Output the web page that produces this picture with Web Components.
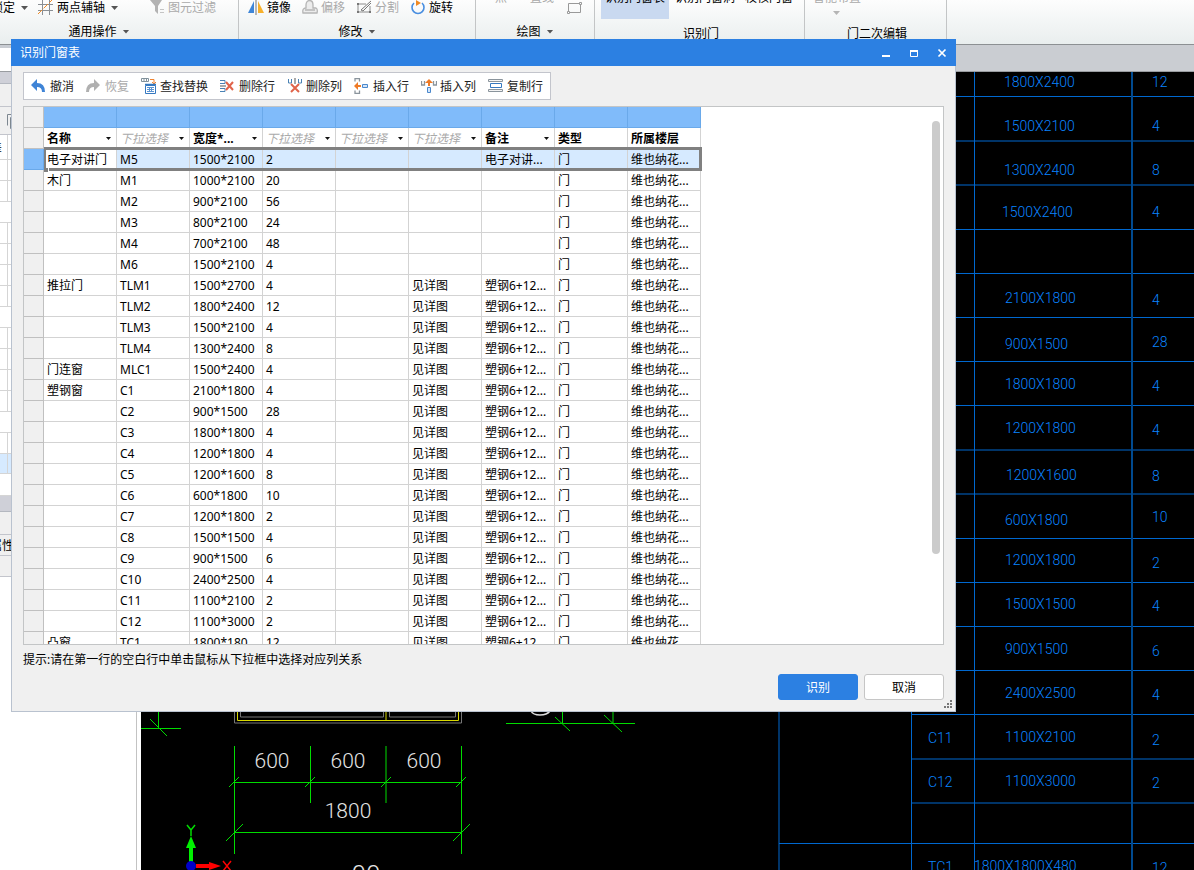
<!DOCTYPE html>
<html lang="zh-CN">
<head>
<meta charset="utf-8">
<title>识别门窗表</title>
<style>
  html, body { margin: 0; height: 100%; }
  body { overflow: hidden; font: 12px/16px "Noto Sans", "Noto Sans CJK SC", sans-serif; color: #000; background: #fff; }
</style>
</head>
<body>
<cad-app></cad-app>

<script>
const define = (name, html, setup, watched = []) => {
  const template = document.createElement('template');
  template.innerHTML = html;
  customElements.define(name, class extends HTMLElement {
    static observedAttributes = watched;
    constructor() {
      super();
      this.attachShadow({ mode: 'open' }).append(template.content.cloneNode(true));
    }
    connectedCallback() { if (setup) setup(this, this.shadowRoot); }
    attributeChangedCallback() { if (setup) setup(this, this.shadowRoot); }
  });
};

/* ---------- icons ---------- */
const icons = {
  axis: '<path d="M4.500 0v15M11.500 0v15M0 4.500h15M0 10.500h15" stroke="#8a8f94" fill="none"/><path d="M0 14 14 0" stroke="#f08a24" stroke-dasharray="6 2"/>',
  filter: '<path d="M1 0h12L9 6v8l-3-3V6z" fill="#b3b3b3"/><path d="M11 9.500h4M11 12.500h4" stroke="#c4c4c4"/>',
  mirror: '<path d="M6 1v12H0z" fill="#3f86d8"/><path d="M10 1v12h6z" fill="#f7b02b"/><path d="M8 0v15" stroke="#777"/>',
  offset: '<path d="M4 8V5c0-6 7-6 7 0v3h3q2 1 1 5H1q-1-5 3-5zM3 10h10" stroke="#b5b5b5" stroke-width="1.3" fill="#ececec"/>',
  split: '<path d="M2 4h8M2 4v8M2 12h12V6" fill="none" stroke="#8c8c8c"/><path d="M5 10 15 1M7 11 15 3M5 10l2 1" stroke="#777" fill="none"/><path d="M1 3h2v2H1zM1 11h2v2H1zM13 11h2v2h-2z" fill="#777"/>',
  rotate: '<path d="M4 3a6 6 0 1 0 8 0" stroke="#4a8fe0" stroke-width="1.6" fill="none"/><path d="M6 0v6l5-3z" fill="#f08a24"/>',
  rect: '<path d="M2.500 3.500h12v9h-12z" stroke="#999" fill="none"/><path d="M1.500 11.500h2v2h-2zM13.500 2.500h2v2h-2z" fill="#fff" stroke="#999"/>',
  undo: '<path d="M0 7 6 1v4q8 0 8 9h-3q0-5-5-5v4z" fill="#3f84d6"/>',
  redo: '<path d="M14 7 8 1v4q-8 0-8 9h3q0-5 5-5v4z" fill="#b0b0b0"/>',
  find: '<path d="M.5.5h7v3h-7zM3 .5v3M5.500.5v3" stroke="#80909a" fill="none"/><path d="M9 1.500h4v4M11 4l2 2 2-2" stroke="#ef8432" fill="none"/><path d="M4 6.500h11" stroke="#3578c0" stroke-width="1.500"/><path d="M4.500 7.500h10v8h-10z" stroke="#3578c0" fill="#fff"/><path d="M6 9.500h7M6 11.500h7M6 13.500h7M8.500 9v5M10.500 9v5" stroke="#5b94d2"/>',
  delrow: '<path d="M0 2.500h5v3H0M0 13.500h5v-3H0" stroke="#4a82b4" fill="none"/><path d="M0 7h6v2H0z" fill="#aaa"/><path d="m6 4 7 8M13 4l-7 8" stroke="#e0644a" stroke-width="2"/>',
  delcol: '<path d="M1.500 1v4h3V1M11.500 1v4h3V1" stroke="#4a82b4" fill="none"/><path d="M7 0h2v6H7z" fill="#aaa"/><path d="m4 6 8 8M12 6l-8 8" stroke="#e0644a" stroke-width="2"/>',
  insrow: '<path d="M1 3.500V.5h4.500v3M1 12.500v3h4.500v-3" stroke="#8a949c" fill="none" stroke-width="1.300"/><path d="M0 8l4-4v3h3v2H4v3z" fill="#ef7b26"/><path d="M8.500 6.500h5v3h-5z" stroke="#4b88cc" fill="#d4e6fa"/>',
  inscol: '<path d="M.5 3v4h3V3M12.500 3v4h3V3" stroke="#8a949c" fill="none" stroke-width="1.300"/><path d="M8 1l4 4H9v3H7V5H4z" fill="#ef7b26"/><path d="M6.500 9.500h3v5h-3z" stroke="#4b88cc" fill="#d4e6fa"/>',
  copy: '<path d="M.5 1.500h14v2H.5zM.5 11.500h14v2H.5z" stroke="#8a949c" fill="#f4f4f4"/><path d="M2.500 5.500h11v4h-11z" stroke="#3578c0" fill="#fff"/>',
  layers: '<path d="M5 .5H.5v11M8 3.500H3.500v11H8" stroke="#7d8790" fill="none"/>'
};
define('app-icon', `
  <style>
    :host { display: block; width: 16px; height: 16px; flex: none; }
    :host([hidden]) { display: none; }
    svg { display: block; width: 16px; height: 16px; }
  </style>
  <svg viewBox="0 0 16 16" aria-hidden="true"></svg>`,
  (el, root) => { root.querySelector('svg').innerHTML = icons[el.getAttribute('name')] || ''; }, ['name']);

define('drop-caret', `
  <style>
    :host { display: block; flex: none; width: 7px; height: 4px; background: #555; clip-path: polygon(0 0, 100% 0, 50% 100%); }
    :host([dim]) { background: #b5b5b5; }
  </style>`);

/* ---------- ribbon ---------- */
define('ribbon-group', `
  <style>
    :host { display: flex; flex-direction: column; flex: none; box-sizing: border-box; height: 44px; border-right: 1px solid #c3c5c6; overflow: hidden; }
    .tools { height: 19px; display: flex; align-items: flex-start; }
    .label { flex: 1; display: flex; align-items: center; justify-content: center; gap: 6px; }
    :host([low]) .label { padding-top: 4px; }
    drop-caret { display: none; }
    :host([menu]) drop-caret { display: block; }
  </style>
  <div class="tools"><slot></slot></div>
  <div class="label"><slot name="label"></slot><drop-caret></drop-caret></div>`);

define('ribbon-tool', `
  <style>
    :host { display: block; flex: none; }
    button { all: unset; display: flex; align-items: center; gap: 3px; height: 16px; white-space: nowrap; font: inherit; }
    button:disabled { color: #aaa; }
    drop-caret { display: none; margin-left: 3px; }
    :host([menu]) drop-caret { display: block; }
    :host([raised]) button { height: 19px; align-items: flex-start; line-height: 16px; padding: 0 4px; }
    :host([raised]) span { margin-top: -10px; }
    :host([on]) { background: #c9d9f0; }
  </style>
  <button type="button"><app-icon></app-icon><span><slot></slot></span><drop-caret></drop-caret></button>`,
  (el, root) => {
    const icon = root.querySelector('app-icon');
    if (el.hasAttribute('icon')) icon.setAttribute('name', el.getAttribute('icon'));
    else icon.hidden = true;
    root.querySelector('button').disabled = el.hasAttribute('disabled');
  });

define('app-ribbon', `
  <style>
    :host { display: flex; height: 44px; overflow: hidden; background: linear-gradient(#fdfdfd, #e9eeee); border-bottom: 1px solid #8c9093; }
    .g1 { width: 239px; } .g2 { width: 237px; } .g3 { width: 119px; } .g4 { width: 210px; } .g5 { width: 142px; }
    .g1 ribbon-tool:nth-child(1) { margin-left: -9px; margin-right: 10px; }
    .g1 ribbon-tool:nth-child(2) { margin-right: 31px; }
    .g1 > [slot=label] { margin-left: -40px; }
    .g2 ribbon-tool { margin-left: 9px; }
    .g2 ribbon-tool + ribbon-tool { margin-left: 11px; }
    .g3 ribbon-tool { margin-left: 15px; }
    .g3 ribbon-tool[icon] { margin-left: 8px; }
    .g4 ribbon-tool:first-child { margin-left: 6px; }
    .g4 ribbon-tool + ribbon-tool { margin-left: 2px; }
    .g5 ribbon-tool { margin-left: 4px; }
    .g4 > [slot=label], .g5 > [slot=label] { margin-left: 3px; }
    .dots { align-self: flex-end; margin: 0 0 4px -32px; }
  </style>
  <ribbon-group class="g1" menu>
    <ribbon-tool menu>锁定</ribbon-tool>
    <ribbon-tool icon="axis" menu>两点辅轴</ribbon-tool>
    <ribbon-tool icon="filter" disabled>图元过滤</ribbon-tool>
    <span slot="label">通用操作</span>
  </ribbon-group>
  <ribbon-group class="g2" menu>
    <ribbon-tool icon="mirror">镜像</ribbon-tool>
    <ribbon-tool icon="offset" disabled>偏移</ribbon-tool>
    <ribbon-tool icon="split" disabled>分割</ribbon-tool>
    <ribbon-tool icon="rotate">旋转</ribbon-tool>
    <span slot="label">修改</span>
  </ribbon-group>
  <ribbon-group class="g3" menu>
    <ribbon-tool raised disabled>点</ribbon-tool>
    <ribbon-tool raised disabled>直线</ribbon-tool>
    <ribbon-tool icon="rect"></ribbon-tool>
    <span slot="label">绘图</span>
  </ribbon-group>
  <ribbon-group class="g4" low>
    <ribbon-tool raised on>识别门窗表</ribbon-tool>
    <ribbon-tool raised>识别门窗洞</ribbon-tool>
    <ribbon-tool raised>校核门窗</ribbon-tool>
    <span slot="label">识别门</span>
  </ribbon-group>
  <ribbon-group class="g5" low>
    <ribbon-tool raised disabled>智能布置</ribbon-tool>
    <drop-caret dim class="dots"></drop-caret>
    <span slot="label">门二次编辑</span>
  </ribbon-group>`);

/* ---------- left panel, mostly hidden behind the dialog ---------- */
define('side-panel', `
  <style>
    :host { display: block; width: 136px; flex: none; border-right: 1px solid #c3c3c3; margin-right: 4px; background: #fff; overflow: hidden; }
    div { box-sizing: border-box; border-bottom: 1px solid #d5d5d5; height: 21px; }
    .bar { height: 12px; background: #cfd0d8; border-color: #b4b8c0; }
    .pane { background: #f0f0f0; border-color: #c3c5cc; }
    .icons { padding: 7px; }
    .head { background: #f0f0f0; text-indent: -10px; line-height: 25px; }
    .row { background: linear-gradient(#d5d5d5, #d5d5d5) 7px 0 / 1px 100% no-repeat; }
    .on { background-color: #d6eaff; }
    .tab { line-height: 21px; text-indent: -10px; }
  </style>`,
  (el, root) => {
    const add = (cls, height, content = '') => {
      const d = document.createElement('div');
      d.className = cls;
      d.append(content);
      d.style.height = height + 'px';
      root.append(d);
    };
    const layers = document.createElement('app-icon');
    layers.setAttribute('name', 'layers');
    add('bar', 12); add('pane', 23); add('pane icons', 28, layers); add('head row', 25, '差');
    [...'11011110111101'].forEach(v => add(v === '1' ? 'row' : '', 21));
    add('row on', 20); add('', 22); add('bar', 16); add('pane', 23); add('pane tab', 21, '属性'); add('pane', 21);
  });

/* ---------- drawing canvas ---------- */
define('cad-canvas', `
  <style>
    :host { display: block; flex: 1; min-width: 0; background: #000; overflow: hidden; }
    svg { display: block; width: 1053px; height: 798px; }
    text { font-family: Roboto, "Noto Sans", sans-serif; font-weight: 300; }
    .blue text { font-size: 14px; fill: #0a84ff; }
    .dim text { font-size: 21px; fill: #e4e4e4; text-anchor: middle; }
    .dim .large { font-size: 26px; }
  </style>
  <svg viewBox="141 72 1053 798" role="img" aria-label="门窗表图纸">
    <g class="blue"></g>
    <g fill="none" stroke="#777"><path d="M234.500 700v23h227V700M240.500 700v17h143V700M389.500 700v17h66V700"/></g>
    <path d="M237.500 700v20.500h221V700M386 700v20" fill="none" stroke="#d8d800"/>
    <g fill="none" stroke="#00dc00">
      <path d="M141 728.500h40M150 719l17 17M158.500 711v17M506 723.500h129M555 717l15 14M604 715l18 17M562.500 711v12M613 711v12"/>
      <path d="M234.500 746v108M461.500 746v108M310.500 746v57M386 746v57M234 782.500h228M234 832.500h228"/>
      <path d="M229 787l10-10M305 787l10-10M381 787l10-10M456 787l10-10M226 841l17-17M453 841l17-17"/>
    </g>
    <path d="M531 711q2 4 9 4t10-4" fill="none" stroke="#ddd" stroke-width="1.500"/>
    <g class="dim">
      <text x="272" y="768">600</text><text x="348" y="768">600</text><text x="424" y="768">600</text><text x="348" y="818">1800</text>
      <text class="large" x="366" y="884">00</text>
    </g>
    <path d="M191 866v-20" stroke="#00f000" stroke-width="4"/><path d="M191 836l-5 12h10z" fill="#00f000"/>
    <path d="M187 825l4 5 4-5M191 830v6" stroke="#00dc00" fill="none" stroke-width="1.500"/>
    <path d="M196 866h15" stroke="#f00" stroke-width="4"/><path d="M221 866l-12-4v8z" fill="#f00"/>
    <path d="M223 861l8 10M231 861l-8 10" stroke="#f00" stroke-width="1.500"/>
    <circle cx="191" cy="866" r="5" fill="#0000c8"/>
  </svg>`,
  (el, root) => {
    const g = root.querySelector('.blue');
    const rows = [
      ['1800X2400', 1004, 82, '12', 1152, 82], ['1500X2100', 1004, 126, '4', 1152, 126],
      ['1300X2400', 1004, 170, '8', 1152, 170], ['1500X2400', 1002, 212, '4', 1152, 212],
      ['2100X1800', 1005, 298, '4', 1152, 300], ['900X1500', 1005, 344, '28', 1152, 342],
      ['1800X1800', 1005, 384, '4', 1152, 386], ['1200X1800', 1005, 428, '4', 1152, 430],
      ['1200X1600', 1006, 475, '8', 1152, 476], ['600X1800', 1005, 520, '10', 1152, 517],
      ['1200X1800', 1005, 560, '2', 1152, 563], ['1500X1500', 1005, 604, '4', 1152, 606],
      ['900X1500', 1005, 649, '6', 1152, 651], ['2400X2500', 1005, 693, '4', 1152, 695],
      ['1100X2100', 1005, 737, '2', 1152, 740], ['1100X3000', 1005, 781, '2', 1152, 783],
      ['1800X1800X480', 974, 866, '12', 1152, 868], ['C11', 928, 738], ['C12', 928, 782], ['TC1', 928, 867]
    ];
    const lines = [96.5, 141, 185, 229.5, 273.5, 317.5, 361.5, 405.5, 450, 494, 538.5, 582.5, 626.5, 670.5, 714.5, 759, 803];
    g.innerHTML =
      '<path fill="none" stroke="#0068d0" d="M974.500 71v799M911.500 700v170M779 700v170M779 843.500h415' +
      lines.map(y => `M911 ${y}h283`).join('') + '"/><path stroke="#004a90" stroke-width="2" d="M1132 71v799"/>' +
      rows.map(([a, x, y, b, bx, by]) =>
        `<text x="${x}" y="${y + 5}">${a}</text>` + (b ? `<text x="${bx}" y="${by + 5}">${b}</text>` : '')).join('');
  });

/* ---------- dialog ---------- */
define('tool-button', `
  <style>
    :host { display: block; }
    button { all: unset; display: flex; align-items: center; gap: 3px; padding: 0 6px; height: 26px; white-space: nowrap; font: inherit; color: #222; }
    button:disabled { color: #aaa; }
    span { padding-top: 2px; }
  </style>
  <button type="button"><app-icon></app-icon><span><slot></slot></span></button>`,
  (el, root) => {
    root.querySelector('app-icon').setAttribute('name', el.getAttribute('icon'));
    root.querySelector('button').disabled = el.hasAttribute('disabled');
  });

define('data-grid', `
  <style>
    :host { display: block; position: relative; overflow: hidden; box-sizing: border-box; background: #fff; border: 1px solid #c3c5c6; }
    table { table-layout: fixed; width: 677px; border-collapse: separate; border-spacing: 0; }
    col { width: 73px; } col:first-child { width: 20px; }
    td, th { box-sizing: border-box; height: 21px; padding: 0 3px; border: solid #d3d3d3; border-width: 0 1px 1px 0; line-height: 20px; text-align: left; font-weight: 400; white-space: nowrap; overflow: hidden; }
    td { padding-top: 2px; line-height: 18px; }
    tr > :first-child { background: #f0f0f0; border-color: #c0c0c0; }
    .letters th + th { background: #80bbfa; border-color: #6aa9ea; }
    .fields th { border-bottom-width: 0; font-weight: 700; }
    .fields th:first-child { border-bottom-width: 1px; }
    label { display: grid; align-items: center; }
    label > * { grid-area: 1 / 1; }
    select { appearance: none; border: 0; margin: 0; padding: 0 10px 0 0; width: 66px; height: 20px; background: none; font: inherit; color: inherit; line-height: 20px; }
    .empty select { font-weight: 400; font-style: italic; color: #aaa; }
    i { justify-self: end; margin-right: 2px; width: 5px; height: 3px; background: #111; clip-path: polygon(0 0, 100% 0, 50% 100%); pointer-events: none; }
    .current td { background: #d6eaff; }
    .current td:nth-child(2) { background: #fff; }
    .current th:first-child { background: #80bbfa; border-color: #6aa9ea; }
    .marker { position: absolute; left: 20px; top: 40px; width: 658px; height: 24px; box-sizing: border-box; border: 3px solid #808080; border-left-width: 2px; }
    .marker::after { content: ""; position: absolute; left: -2px; bottom: -4px; width: 4px; height: 4px; background: #808080; border: solid #fff; border-width: 0 1px 0 0; }
    .thumb { position: absolute; right: 3px; top: 14px; width: 8px; height: 433px; border-radius: 4px; background: #cbcbcb; }
  </style>
  <table aria-label="门窗表">
    <colgroup><col><col><col><col><col><col><col><col><col><col></colgroup>
    <thead></thead><tbody></tbody>
  </table>
  <div class="marker"></div><div class="thumb"></div>`,
  (el, root) => {
    const fields = ['名称', '', '宽度*...', '', '', '', '备注', '类型', '所属楼层'];
    const head = fields.map((f, i) => i > 6 ? `<th scope="col">${f}</th>` :
      `<th scope="col" class="${f ? '' : 'empty'}"><label><select aria-label="列 ${i + 1}"><option>${f || '下拉选择'}</option></select><i></i></label></th>`).join('');
    root.querySelector('thead').innerHTML =
      `<tr class="letters">${'<th></th>'.repeat(10)}</tr><tr class="fields"><th></th>${head}</tr>`;
    const data = `电子对讲门,M5,1500*2100,2|木门,M1,1000*2100,20|,M2,900*2100,56|,M3,800*2100,24|,M4,700*2100,48|,M6,1500*2100,4|推拉门,TLM1,1500*2700,4|,TLM2,1800*2400,12|,TLM3,1500*2100,4|,TLM4,1300*2400,8|门连窗,MLC1,1500*2400,4|塑钢窗,C1,2100*1800,4|,C2,900*1500,28|,C3,1800*1800,4|,C4,1200*1800,4|,C5,1200*1600,8|,C6,600*1800,10|,C7,1200*1800,2|,C8,1500*1500,4|,C9,900*1500,6|,C10,2400*2500,4|,C11,1100*2100,2|,C12,1100*3000,2|凸窗,TC1,1800*180...,12`;
    root.querySelector('tbody').innerHTML = data.split('|').map((line, i) => {
      const cells = [...line.split(','), '', i > 5 ? '见详图' : '', i > 5 ? '塑钢6+12...' : i ? '' : '电子对讲...', '门', '维也纳花...'];
      return `<tr class="${i ? '' : 'current'}"><th scope="row"></th>${cells.map(c => `<td>${c}</td>`).join('')}</tr>`;
    }).join('');
  });

define('table-dialog', `
  <style>
    :host { display: flex; flex-direction: column; background: #f0f0f0; box-sizing: border-box; }
    header { display: flex; align-items: center; height: 27px; background: #2c80e2; color: #fff; padding-left: 9px; }
    h1 { flex: 1; margin: 0; font: inherit; }
    header button { all: unset; display: grid; place-items: center; width: 28px; height: 27px; }
    header svg { display: block; width: 10px; height: 10px; }
    main { flex: 1; min-height: 0; display: flex; flex-direction: column; border: 1px solid #b9c2cf; border-top: 0; padding: 6px 11px 11px; }
    .tools { display: flex; align-self: flex-start; height: 26px; padding: 0 1px; background: #fff; border: 1px solid #c3c5cc; margin-bottom: 6px; }
    data-grid { flex: 1; min-height: 0; }
    p { margin: 0; line-height: 29px; }
    footer { display: flex; justify-content: flex-end; gap: 6px; }
    footer button { box-sizing: border-box; width: 80px; height: 26px; padding: 2px 0 0; border: 1px solid #c6c6c6; border-radius: 3px; background: #fff; font: inherit; }
    footer .primary { background: #2c80e2; border-color: #2c80e2; color: #fff; }
    .grip { position: absolute; right: 4px; bottom: 4px; width: 8px; height: 8px; }
  </style>
  <header>
    <h1><slot name="title"></slot></h1>
    <button type="button" aria-label="最小化"><svg viewBox="0 0 10 10"><path d="M1 7h8v2H1z" fill="#fff"/></svg></button>
    <button type="button" aria-label="最大化"><svg viewBox="0 0 10 10"><path d="M1.500 2.500h7v6h-7z" fill="none" stroke="#fff"/><path d="M1 2h8v2H1z" fill="#fff"/></svg></button>
    <button type="button" aria-label="关闭"><svg viewBox="0 0 10 10"><path d="M1.500 1.500l7 7M8.500 1.500l-7 7" stroke="#fff" stroke-width="1.700"/></svg></button>
  </header>
  <main>
    <div class="tools">
      <tool-button icon="undo">撤消</tool-button>
      <tool-button icon="redo" disabled>恢复</tool-button>
      <tool-button icon="find">查找替换</tool-button>
      <tool-button icon="delrow">删除行</tool-button>
      <tool-button icon="delcol">删除列</tool-button>
      <tool-button icon="insrow">插入行</tool-button>
      <tool-button icon="inscol">插入列</tool-button>
      <tool-button icon="copy">复制行</tool-button>
    </div>
    <data-grid></data-grid>
    <p>提示:请在第一行的空白行中单击鼠标从下拉框中选择对应列关系</p>
    <footer><button type="button" class="primary">识别</button><button type="button">取消</button></footer>
  </main>
  <svg class="grip" viewBox="0 0 8 8" aria-hidden="true"><path d="M6 0h2v2H6zM3 3h2v2H3zM6 3h2v2H6zM0 6h2v2H0zM3 6h2v2H3zM6 6h2v2H6z" fill="#777"/></svg>`);

define('cad-app', `
  <style>
    :host { display: flex; flex-direction: column; height: 100vh; position: relative; overflow: hidden; }
    .strip { display: flex; height: 26px; flex: none; background: #cacdd2; border-bottom: 1px solid #999ca0; }
    .strip::before { content: ""; width: 20px; background: #fff; border-top: 3px solid #c8ccd2; box-sizing: border-box; }
    .work { flex: 1; min-height: 0; display: flex; }
    table-dialog { position: absolute; left: 11px; right: 238px; top: 39px; bottom: 158px; }
  </style>
  <app-ribbon></app-ribbon>
  <div class="strip"></div>
  <div class="work"><side-panel></side-panel><cad-canvas></cad-canvas></div>
  <table-dialog><span slot="title">识别门窗表</span></table-dialog>`);
</script>
</body>
</html>
